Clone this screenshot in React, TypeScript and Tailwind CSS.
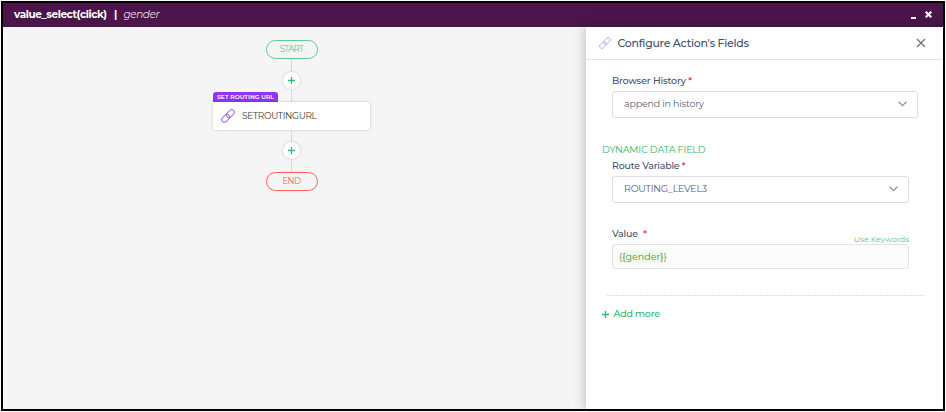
import React from 'react';

function LinkIcon({ className }: { className: string }) {
  return (
    <svg viewBox="0 0 24 24" fill="none" stroke="currentColor" strokeWidth="1.7" className={className}>
      <g transform="rotate(-45 12 12)">
        <rect x="-1.5" y="7.500" width="15.500" height="9" rx="4.500" />
        <rect x="10" y="7.500" width="15.500" height="9" rx="4.500" />
      </g>
    </svg>
  );
}

function Cross({ className, width }: { className: string; width: number }) {
  return (
    <svg viewBox="0 0 10 10" fill="none" stroke="currentColor" strokeWidth={width} className={className}>
      <path d="M1 1 9 9M9 1 1 9" />
    </svg>
  );
}

function Plus({ className }: { className: string }) {
  return (
    <svg viewBox="0 0 7 7" fill="none" stroke="currentColor" strokeWidth="1.3" className={className}>
      <path d="M3.500 0V7M0 3.500H7" />
    </svg>
  );
}

function AddButton() {
  return (
    <button className="flex h-[17px] w-[17px] shrink-0 items-center justify-center rounded-full bg-white text-[#2fbf71] shadow-[0_0_3px_rgba(0,0,0,0.2)]">
      <Plus className="h-[7px] w-[7px]" />
    </button>
  );
}

function Select({ children, className }: { children: React.ReactNode; className: string }) {
  return (
    <div className={`flex items-center justify-between rounded-[3px] border border-[#dcdde5] bg-white pl-[11px] text-[#566180] ${className}`}>
      {children}
      <svg viewBox="0 0 9 6" fill="none" stroke="#8b979f" strokeWidth="1.3" className="h-[6px] w-[9px]">
        <path d="M.6.8 4.500 4.700 8.400.8" />
      </svg>
    </div>
  );
}

export default function App() {
  return (
    <div className="h-[412px] w-[946px] bg-white pl-px pt-px font-['Montserrat','Inter',sans-serif]">
      <div className="flex h-[410px] w-[944px] flex-col overflow-hidden border-2 border-black">
        <header className="flex h-6 shrink-0 items-center bg-[#4b154b] pb-px pl-[11px] pr-[11px] text-[10.500px] text-white">
          <span className="w-[100px] whitespace-nowrap font-bold tracking-[-0.42px]">value_select(click)</span>
          <span className="w-[9.500px] font-bold">|</span>
          <span className="italic tracking-[-0.42px] text-[#e4d8e4]">gender</span>
          <span className="ml-auto mr-[9px] mt-[6px] h-[2px] w-[5px] bg-white" />
          <Cross className="h-[7px] w-[7px]" width={3} />
        </header>

        <div className="flex min-h-0 flex-1">
          <main className="flex w-[583px] shrink-0 flex-col items-center bg-[#f5f5f5] pr-[6px] pt-[13px]">
            <div className="flex h-[19px] w-[52px] shrink-0 items-center justify-center rounded-full border border-[#5fcb93] pb-px text-[8.500px] tracking-[-0.62px] text-[#5cc48d]">START</div>
            <div className="h-[13px] w-px shrink-0 bg-[#d8d8d8]" />
            <AddButton />
            <div className="flex w-[157px] flex-col items-start">
              <div className="flex w-full items-start">
                <div className="mt-[3px] flex h-[10px] w-[65px] items-center justify-center whitespace-nowrap rounded-t-[3px] bg-[#8f36f5] text-[6px] font-semibold tracking-[0.02px] text-white">SET ROUTING URL</div>
                <div className="ml-[13px] h-[13px] w-px bg-[#d8d8d8]" />
              </div>
              <div className="flex h-[28px] w-full items-center rounded-b-[3px] rounded-tr-[3px] bg-white pl-[8px] text-[9px] tracking-[-0.33px] text-[#404040] shadow-[0_0_3px_rgba(0,0,0,0.2)]">
                <LinkIcon className="mr-[7px] h-[14px] w-[14px] overflow-visible text-[#a56bf5]" />
                SETROUTINGURL
              </div>
            </div>
            <div className="h-3 w-px shrink-0 bg-[#d8d8d8]" />
            <AddButton />
            <div className="h-[13px] w-px shrink-0 bg-[#d8d8d8]" />
            <div className="flex h-[19px] w-[52px] shrink-0 items-center justify-center rounded-full border border-[#ff5c5c] pb-px text-[8.500px] tracking-[-0.5px] text-[#f05f5f]">END</div>
          </main>

          <aside className="z-10 flex flex-1 flex-col bg-white shadow-[0_0_12px_rgba(0,0,0,0.28)]">
            <div className="flex h-[33px] shrink-0 items-center border-b border-[#e4e4e4] pl-[13px] pr-[17px]">
              <LinkIcon className="mr-[6.500px] h-[12px] w-[12px] overflow-visible text-[#c39bf5]" />
              <h1 className="text-[11px] font-medium tracking-[-0.28px] text-[#43506a]">Configure Action's Fields</h1>
              <Cross className="ml-auto h-[10px] w-[10px] text-[#6b7880]" width={1.4} />
            </div>

            <div className="flex flex-col pl-[26px] text-[9.500px] leading-3 text-[#465170]">
              <div className="mt-[15px] whitespace-nowrap font-medium tracking-[-0.18px]">Browser History <span className="text-red-500">*</span></div>
              <Select className="mt-[4px] h-[27px] w-[306px] pb-px pr-[10px] tracking-[-0.2px]">append in history</Select>
              <h2 className="-ml-[10px] mt-[26px] tracking-[-0.17px] text-[#35b86b]">DYNAMIC DATA FIELD</h2>
              <div className="mt-[4px] font-medium tracking-[-0.22px]">Route Variable <span className="text-red-500">*</span></div>
              <Select className="mt-[4px] h-[27px] w-[297px] pb-px pr-[10px] tracking-[-0.24px]">ROUTING_LEVEL3</Select>
              <div className="mt-[25px] flex h-[16px] w-[297px] justify-between">
                <span className="font-medium tracking-[-0.2px]">Value <span className="ml-[3px] text-red-500">*</span></span>
                <span className="mt-[5px] text-[8px] tracking-[-0.08px] text-[#62c28b]">Use Keywords</span>
              </div>
              <div className="flex h-[25px] w-[297px] items-center rounded-[3px] border border-[#e3e3e3] bg-[#fcfcfc] pl-[6px] tracking-[0.04px] text-[#3f9f52]">
                <span>{'{'}</span>
                <span className="bg-[#eff8e9] text-[#58745a]">{'{'}<span className="text-[#3f9f52]">gender</span>{'}'}</span>
                <span>{'}'}</span>
              </div>
              <div className="-ml-[5px] mt-[26px] h-px w-[317px] bg-[repeating-linear-gradient(90deg,#dedede_0_2px,transparent_2px_3px)]" />
              <button className="-ml-[10px] mt-[12px] flex items-center font-medium tracking-[-0.22px] text-[#35b86b]">
                <Plus className="mr-[4.500px] h-[7px] w-[7px]" />
                Add more
              </button>
            </div>
          </aside>
        </div>
      </div>
    </div>
  );
}
